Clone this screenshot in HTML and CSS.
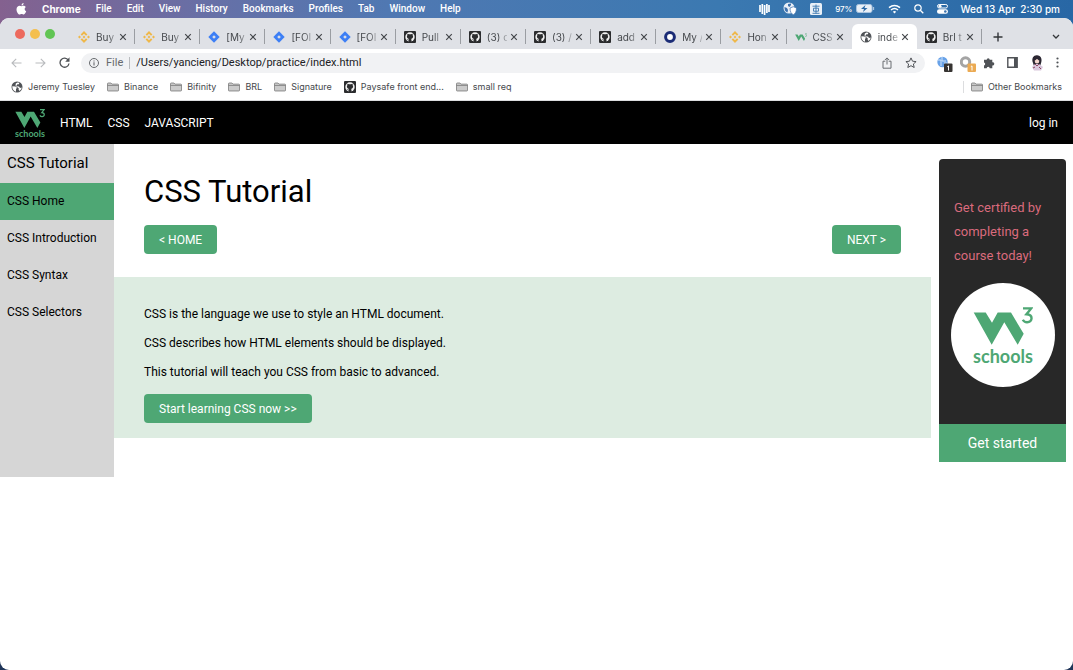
FILE: index.html
```html
<!DOCTYPE html>
<html lang="en">
<head>
<meta charset="utf-8">
<title>index.html</title>
<link rel="stylesheet" href="styles.css">
</head>
<body>
<svg class="defs" aria-hidden="true">
  <symbol id="binance" viewBox="0 0 12 12"><path fill="#efb84a" d="M6 0 9.400 3.400 8 4.800 6 2.800 4 4.800 2.600 3.400zM1.500 4.500 3 6 1.500 7.500 0 6zM10.500 4.500 12 6 10.500 7.500 9 6zM6 4.600 7.400 6 6 7.400 4.600 6zM2.600 8.600 4 7.200 6 9.200 8 7.200 9.400 8.600 6 12z"/></symbol>
  <symbol id="jira" viewBox="0 0 12 12"><path fill="#3d7ff5" d="M6 .3 11.700 6 6 11.700 .3 6z"/><path fill="#dfe1e6" d="M6 4.200 7.800 6 6 7.800 4.200 6z"/></symbol>
  <symbol id="github" viewBox="0 0 12 12"><rect width="12" height="12" rx="1" fill="#2b2c2e"/><circle cx="6" cy="6" r="4.700" fill="#f1f1f1"/><path fill="#2b2c2e" d="M4.600 11V9.300C3.600 9.500 3.200 8.800 2.800 8.300c.9-.1.900.6 1.800.5l.3-.9C3.500 7.700 2.900 6.800 2.900 5.600c0-.6.200-1 .5-1.400-.2-.5-.1-1 .1-1.500.6 0 1.100.3 1.500.6a4 4 0 0 1 2 0c.4-.3.900-.6 1.500-.6.2.5.3 1 .1 1.500.3.400.5.800.5 1.400 0 1.200-.6 2.100-2 2.300.3.300.4.600.4 1.100V11z"/></symbol>
  <symbol id="ring" viewBox="0 0 12 12"><circle cx="6" cy="6" r="4.400" fill="#fff" stroke="#1b2c76" stroke-width="3"/></symbol>
  <symbol id="globe" viewBox="0 0 12 12"><circle cx="6" cy="6" r="5.500" fill="#505357"/><path fill="#fff" d="M1.300 5.300 4.500 5.500 6 6.800 5 8v2.700C2.600 10.200 1.200 8.200 1.300 5.300zM6.500 1.500l1.700.3-.2 1.400H6.500L5.300 4.500 6.500 5.500H8l1 1.500 1.700-.4-.5 1.600L8.500 10 7.500 8.300l.3-1L6 6 4.500 4.500l.3-2z"/></symbol>
  <symbol id="folder" viewBox="0 0 13 10"><path d="M.5 8.500v-7a.8.800 0 0 1 .8-.8h3l1.200 1.200h6.200a.8.800 0 0 1 .8.800v5.800a.8.800 0 0 1-.8.800H1.300a.8.800 0 0 1-.8-.8zM.5 3.300h12" fill="#cbcbcb" stroke="#7c7c7c" stroke-width=".9"/></symbol>
  <symbol id="close" viewBox="0 0 8 8"><path d="m1.200 1.200 5.600 5.600m0-5.600L1.200 6.800" stroke="#45484c" stroke-width="1.200"/></symbol>
  <symbol id="w3mark" viewBox="0 0 60 40"><path fill="#4ea774" d="M.7 7.500h12L19 17.800l5.700-10.300H38l12.700 21.300-6 11-13.400-22.600-12.600 22.600z"/><path d="M50 3.400h8.200l-4.700 5.800c7 .2 6.300 8.200.5 8-2 0-3.400-1-4.200-2.500" fill="none" stroke="#4ea774" stroke-width="2.400"/></symbol>
  <symbol id="w3" viewBox="0 0 60 60"><use href="#w3mark" width="60" height="40"/><text x="30" y="58" text-anchor="middle" class="logo-word">schools</text></symbol>
</svg>
<div class="desktop">
  <header class="menubar">
    <nav class="menus">
      <svg class="apple" viewBox="0 0 11 12"><path fill="#fff" d="M7.600 0c.1 1.300-.9 2.400-2.100 2.500C5.400 1.300 6.500.1 7.600 0zM9.800 4C8 5.200 8.400 7.500 10.200 8.200 9.600 10 8.500 11.500 7.600 11.500c-.8 0-1-.5-2-.5s-1.300.5-2 .5C2 11.500.5 8.700.5 6.500c0-3.800 3.200-4.500 5-3.300C7 2.500 8.800 2.600 9.800 4z"/></svg>
      <b>Chrome</b><span>File</span><span>Edit</span><span>View</span><span>History</span><span>Bookmarks</span><span>Profiles</span><span>Tab</span><span>Window</span><span>Help</span>
    </nav>
    <div class="status">
      <svg width="11" height="12" viewBox="0 0 11 12"><path d="M1 2v7M3.300 1v10M5.600 2v10M7.900 1v9M10 2v7" stroke="#fff" stroke-width="1.700"/></svg>
      <svg width="14" height="13" viewBox="0 0 14 13"><circle cx="6" cy="6" r="5.500" fill="#e9eff7"/><path d="M1.500 5 4 6l1 2-.5 2.500C2.500 10 1.300 8 1.500 5zM5 2l3-.5V3L6.500 5 5 4z" fill="#3e71ad"/><path d="m7 6 3.300-1.300L13.500 6c0 4-1.500 6-3.200 6.700C8.500 12 7 10 7 6z" fill="#fff" stroke="#3e71ad" stroke-width=".7"/></svg>
      <svg width="12" height="12" viewBox="0 0 12 12"><rect width="12" height="12" rx="1.500" fill="#e9f0f7"/><path d="M2.500 3.200h7M3.500 5.200h5v3h-5zM6 1.500v9M2.500 10.300h7" stroke="#3976af" fill="none" stroke-width=".9"/></svg>
      <span class="battery">97%<svg width="19" height="9" viewBox="0 0 19 9"><rect x=".5" y=".5" width="15.500" height="8" rx="2" fill="#e9eff6" stroke="#a8c3df"/><path d="M17.500 3v3" stroke="#a8c3df" stroke-width="1.300"/><path d="M9.500 1 5 5h3L7 8l4.500-4h-3z" fill="#2867a5"/></svg></span>
      <svg class="wifi" width="13" height="10" viewBox="0 0 13 10"><path d="M1 3.700q5.500-4.500 11 0M3 6q3.500-3 7 0" fill="none" stroke="#fff" stroke-width="1.500"/><path d="M4.800 7.700 6.500 9.500l1.700-1.800q-1.700-1.400-3.400 0" fill="#fff"/></svg>
      <svg width="10" height="10" viewBox="0 0 10 10"><circle cx="4" cy="4" r="3.200" fill="none" stroke="#fff" stroke-width="1.200"/><path d="m6.300 6.300 3 3" stroke="#fff" stroke-width="1.300"/></svg>
      <svg width="11" height="10" viewBox="0 0 11 10"><rect x=".5" y=".5" width="10" height="3.500" rx="1.700" fill="none" stroke="#fff"/><circle cx="3" cy="2.200" r="1.500" fill="#fff"/><rect y="5.300" width="11" height="4.500" rx="2.200" fill="#fff"/><circle cx="8.300" cy="7.500" r="1.300" fill="#3c73ad"/></svg>
      <span>Wed 13 Apr&nbsp; 2:30 pm</span>
    </div>
  </header>
  <div class="window">
    <div class="tabstrip">
      <div class="lights"><i class="red"></i><i class="amber"></i><i class="green"></i></div>
      <div class="tabs">
        <div class="tab"><svg><use href="#binance"/></svg><span>Buy</span><button aria-label="Close tab"><svg><use href="#close"/></svg></button></div>
        <div class="tab"><svg><use href="#binance"/></svg><span>Buy</span><button aria-label="Close tab"><svg><use href="#close"/></svg></button></div>
        <div class="tab"><svg><use href="#jira"/></svg><span>[My</span><button aria-label="Close tab"><svg><use href="#close"/></svg></button></div>
        <div class="tab"><svg><use href="#jira"/></svg><span>[FOI</span><button aria-label="Close tab"><svg><use href="#close"/></svg></button></div>
        <div class="tab"><svg><use href="#jira"/></svg><span>[FOI</span><button aria-label="Close tab"><svg><use href="#close"/></svg></button></div>
        <div class="tab"><svg><use href="#github"/></svg><span>Pull</span><button aria-label="Close tab"><svg><use href="#close"/></svg></button></div>
        <div class="tab"><svg><use href="#github"/></svg><span>(3) c</span><button aria-label="Close tab"><svg><use href="#close"/></svg></button></div>
        <div class="tab"><svg><use href="#github"/></svg><span>(3) /</span><button aria-label="Close tab"><svg><use href="#close"/></svg></button></div>
        <div class="tab"><svg><use href="#github"/></svg><span>add</span><button aria-label="Close tab"><svg><use href="#close"/></svg></button></div>
        <div class="tab"><svg><use href="#ring"/></svg><span>My /</span><button aria-label="Close tab"><svg><use href="#close"/></svg></button></div>
        <div class="tab"><svg><use href="#binance"/></svg><span>Hon</span><button aria-label="Close tab"><svg><use href="#close"/></svg></button></div>
        <div class="tab before"><svg><use href="#w3mark"/></svg><span>CSS</span><button aria-label="Close tab"><svg><use href="#close"/></svg></button></div>
        <div class="tab active"><svg><use href="#globe"/></svg><span>inde</span><button aria-label="Close tab"><svg><use href="#close"/></svg></button></div>
        <div class="tab"><svg><use href="#github"/></svg><span>Brl t</span><button aria-label="Close tab"><svg><use href="#close"/></svg></button></div>
      </div>
      <div class="tabtools">
        <button aria-label="New tab"><svg width="10" height="10" viewBox="0 0 10 10"><path d="M5 .5v9M.5 5h9" stroke="#333639" stroke-width="1.400"/></svg></button>
        <button aria-label="Search tabs"><svg width="8" height="6" viewBox="0 0 8 6"><path d="m1 1 3 3 3-3" fill="none" stroke="#333639" stroke-width="1.300"/></svg></button>
      </div>
    </div>
    <div class="toolbar">
      <div class="navs">
        <button aria-label="Back"><svg width="11" height="10" viewBox="0 0 11 10"><path d="M10.500 5H1m4.200-4.200L1 5l4.200 4.200" fill="none" stroke="#b9bbbe" stroke-width="1.100"/></svg></button>
        <button aria-label="Forward"><svg width="11" height="10" viewBox="0 0 11 10"><path d="M.5 5H10M5.800.8 10 5 5.800 9.200" fill="none" stroke="#b9bbbe" stroke-width="1.100"/></svg></button>
        <button aria-label="Reload"><svg width="11" height="11" viewBox="0 0 11 11"><path d="M9.300 3.200A4.500 4.500 0 1 0 10 6.500" fill="none" stroke="#505357" stroke-width="1.300"/><path d="M10.500.3v4.400H6.200z" fill="#505357"/></svg></button>
      </div>
      <div class="omnibox">
        <svg width="10" height="10" viewBox="0 0 10 10"><circle cx="5" cy="5" r="4.500" fill="none" stroke="#66696d"/><path d="M5 4.300v3.200M5 2.400v1.100" stroke="#66696d" stroke-width="1.100"/></svg>
        <label for="address">File</label>
        <input id="address" value="/Users/yancieng/Desktop/practice/index.html">
        <svg width="10" height="12" viewBox="0 0 10 12"><path d="M3.300 4.200H1v7h8v-7H6.700M5 7.500V1M2.900 3 5 .9 7.100 3" fill="none" stroke="#696c70"/></svg>
        <svg width="12" height="11" viewBox="0 0 12 11"><path d="m6 .9 1.500 3.300 3.600.4-2.700 2.400.8 3.500L6 8.700l-3.200 1.800.8-3.500L.9 4.600l3.600-.4z" fill="none" stroke="#505357"/></svg>
      </div>
      <div class="extensions">
        <svg width="16" height="16" viewBox="0 0 16 16"><circle cx="5.500" cy="6" r="5.200" fill="#68a2e8"/><path d="M1 4h3v3m1-6v4h4M4 7v3m3-3h3" stroke="#cfe3fa" fill="none"/><rect x="7" y="7.500" width="8.500" height="8.500" rx="1" fill="#373432"/><path d="m10.300 10.700 1.200-.8v4.600" fill="none" stroke="#fff"/></svg>
        <svg width="16" height="16" viewBox="0 0 16 16"><circle cx="5.500" cy="6" r="4.200" fill="none" stroke="#a4a4a4" stroke-width="3"/><rect x="7.500" y="7.500" width="8.500" height="8.500" rx="1" fill="#ebaa52"/><path d="m10.800 10.700 1.200-.8v4.600" fill="none" stroke="#fff"/></svg>
        <svg width="12" height="12" viewBox="0 0 12 12"><path fill="#505357" d="M1 2.700h2.700a1.500 1.500 0 1 1 3 0H9.300v2.600a1.600 1.600 0 1 1 0 3.100v2.800H6.700a1.500 1.500 0 0 0-3 0H1V8.500a1.600 1.600 0 0 0 0-3.100z"/></svg>
        <svg width="11" height="11" viewBox="0 0 11 11"><path d="M.8.8h9.400v9.400H.8z" fill="none" stroke="#505357" stroke-width="1.400"/><path d="M7 1h3v9H7z" fill="#505357"/></svg>
        <svg width="14" height="16" viewBox="0 0 14 16"><path d="M3 8C1 3 4 0 7 .3c4 0 5.500 4 4 8l-1 3H4z" fill="#2b2732"/><path d="m2 12 3-3h4l4 3-2 3.500H4z" fill="#d9c7dc"/><ellipse cx="7" cy="6" rx="2.300" ry="2.500" fill="#f4d6cd"/><path d="m5 9 2 2 2-2M3 13l2-1m4 0 2 2" stroke="#8d4662" fill="none"/><path d="M4.500 5 7 3l2.500 2" stroke="#2b2732" fill="none" stroke-width="1.500"/></svg>
        <svg width="3" height="11" viewBox="0 0 3 11" fill="#505357"><circle cx="1.500" cy="1.500" r="1.100"/><circle cx="1.500" cy="5.500" r="1.100"/><circle cx="1.500" cy="9.500" r="1.100"/></svg>
      </div>
    </div>
    <div class="bookmarks">
      <a href="#"><svg class="fav"><use href="#globe"/></svg>Jeremy Tuesley</a>
      <a href="#"><svg><use href="#folder"/></svg>Binance</a>
      <a href="#"><svg><use href="#folder"/></svg>Bifinity</a>
      <a href="#"><svg><use href="#folder"/></svg>BRL</a>
      <a href="#"><svg><use href="#folder"/></svg>Signature</a>
      <a href="#"><svg class="fav"><use href="#github"/></svg>Paysafe front end...</a>
      <a href="#"><svg><use href="#folder"/></svg>small req</a>
      <a href="#" class="other"><svg><use href="#folder"/></svg>Other Bookmarks</a>
    </div>
    <div class="page">
      <header class="topnav">
        <svg class="logo" role="img" aria-label="W3 Schools"><use href="#w3"/></svg>
        <a href="#">HTML</a><a href="#">CSS</a><a href="#">JAVASCRIPT</a><a href="#" class="login">log in</a>
      </header>
      <div class="columns">
        <nav class="sidebar">
          <h2>CSS Tutorial</h2>
          <a href="#" class="current">CSS Home</a><a href="#">CSS Introduction</a><a href="#">CSS Syntax</a><a href="#">CSS Selectors</a>
        </nav>
        <main>
          <div class="intro">
            <h1>CSS Tutorial</h1>
            <div class="pager"><button class="btn">&lt; HOME</button><button class="btn">NEXT &gt;</button></div>
          </div>
          <section class="panel">
            <p>CSS is the language we use to style an HTML document.</p>
            <p>CSS describes how HTML elements should be displayed.</p>
            <p>This tutorial will teach you CSS from basic to advanced.</p>
            <button class="btn">Start learning CSS now &gt;&gt;</button>
          </section>
        </main>
        <aside>
          <div class="card">
            <p>Get certified by completing a course today!</p>
            <div class="badge"><svg role="img" aria-label="W3 Schools"><use href="#w3"/></svg></div>
            <button>Get started</button>
          </div>
        </aside>
      </div>
    </div>
  </div>
</div>
</body>
</html>
```
FILE: styles.css
```css
* { box-sizing: border-box; }
body { margin: 0; font-family: Roboto, sans-serif; font-size: 12px; color: #000; }
button { border: 0; padding: 0; background: none; font: inherit; color: inherit; display: block; }
a { color: inherit; text-decoration: none; }
svg { display: block; flex: none; }
.defs { position: absolute; width: 0; height: 0; }

.desktop {
  min-height: 100vh; display: flex; flex-direction: column;
  background: linear-gradient(90deg, #84618f 0, #6670a7 20%, #5078b2 36%, #3b79b1 67%, #2867a5 100%) top / 100% 40px no-repeat, #1f3558;
}
.menubar {
  height: 18px; display: flex; align-items: center; justify-content: space-between;
  padding: 0 13px 1px 16px; color: #fff; font: 500 10px Inter, sans-serif;
}
.menus { display: flex; align-items: center; gap: 15px; font: 500 10px Roboto, sans-serif; }
.menus b { font: 700 10px Inter, sans-serif; }
.apple { width: 11px; height: 12px; }
.status { display: flex; align-items: center; gap: 13px; }
.battery { display: flex; align-items: center; gap: 3px; font-size: 8px; }

.window { flex: 1; display: flex; flex-direction: column; background: #fff; border-radius: 9px; overflow: hidden; }
.tabstrip { height: 31px; background: #dfe1e6; display: flex; align-items: flex-end; font: 10px Inter, sans-serif; color: #45484c; }
.lights { flex: none; width: 70px; height: 31px; padding: 0 0 0 15px; display: flex; align-items: center; gap: 5px; }
.lights i { width: 10px; height: 10px; border-radius: 50%; }
.red { background: #ed6a5e; }
.amber { background: #f4bf4f; }
.green { background: #61c554; }
.tabs { flex: 1; min-width: 0; display: flex; }
.tab { flex: 1 1 0; min-width: 0; height: 25px; display: flex; align-items: center; padding: 0 8px; background: linear-gradient(#9a9da2, #9a9da2) right center / 1px 15px no-repeat; }
.tab > svg { width: 12px; height: 12px; margin-right: 6px; }
.tab span { flex: 1; min-width: 0; white-space: nowrap; mask-image: linear-gradient(90deg, #000 60%, #0004 100%); }
.tab button { margin-left: 3px; }
.tab button svg { width: 8px; height: 8px; }
.tab.before { background: none; }
.tab.active { background: #fff; border-radius: 6px 6px 0 0; }
.tabtools { flex: none; width: 91px; height: 25px; display: flex; align-items: center; justify-content: space-between; padding: 0 13px 0 11px; }

.toolbar { height: 27px; display: flex; align-items: center; padding: 0 14px 0 11px; }
.navs { width: 70px; display: flex; gap: 13px; }
.omnibox { flex: 1; height: 20px; border-radius: 10px; background: #f1f2f4; display: flex; align-items: center; padding: 0 8px; font: 11px Roboto, sans-serif; color: #66696d; }
.omnibox label { margin-left: 7px; padding-right: 6px; border-right: 1px solid #b9bbbe; line-height: 12px; }
.omnibox input { flex: 1; min-width: 0; border: 0; padding: 0 6px; background: none; font: 11px Roboto, sans-serif; color: #202124; }
.omnibox > svg + svg { margin-left: 13px; }
.extensions { display: flex; align-items: center; gap: 12px; padding-left: 12px; }
.extensions svg:nth-child(-n+2) { margin: 3px -5px 0 0; }

.bookmarks { height: 25px; border-bottom: 1px solid #dcdddf; display: flex; align-items: center; gap: 12px; padding: 0 11px 3px; font: 9px Inter, sans-serif; color: #45484c; }
.bookmarks a { display: flex; align-items: center; gap: 5px; white-space: nowrap; }
.bookmarks svg { width: 12px; height: 10px; }
.bookmarks .fav { width: 12px; height: 12px; }
.other { margin-left: auto; padding-left: 7px; border-left: 1px solid #dcdddf; line-height: 12px; }

.topnav { height: 43px; display: flex; align-items: center; gap: 15px; padding: 0 15px; background: #000; color: #fff; }
.topnav .logo { width: 30px; height: 30px; }
.logo-word { font: 700 18px Lato, sans-serif; fill: #4ea774; }
.login { margin-left: auto; }
.columns { display: grid; grid-template-columns: 114px 1fr 142px; }
.sidebar { background: #d6d6d6; min-height: 333px; }
.sidebar h2 { margin: 0; padding: 0 7px; font-size: 15px; font-weight: 400; line-height: 39px; }
.sidebar a { display: block; padding: 0 7px; line-height: 37px; }
.sidebar .current { background: #4ea774; }
.intro { padding: 30px 30px 23px; }
h1 { margin: 0 0 15px; font-size: 31px; font-weight: 400; line-height: 36px; }
.pager { display: flex; justify-content: space-between; }
.btn { height: 29px; padding: 0 15px; border-radius: 4px; background: #4ea774; color: #fff; }
.panel { padding: 30px 30px 15px; background: #ddece1; }
.panel p { margin: 0 0 15px; line-height: 14px; }
aside { padding: 15px 7px 0 8px; }
.card { background: #282828; border-radius: 4px 4px 0 0; }
.card p { margin: 0; padding: 37px 15px 15px; font-size: 13px; line-height: 24px; color: #da6b7d; }
.badge { width: 104px; height: 104px; margin: 0 auto 37px; border-radius: 50%; background: #fff; display: flex; align-items: center; justify-content: center; }
.badge svg { width: 60px; height: 60px; }
.card button { width: 100%; height: 38px; background: #4ea774; color: #fff; font-size: 14px; }
```
